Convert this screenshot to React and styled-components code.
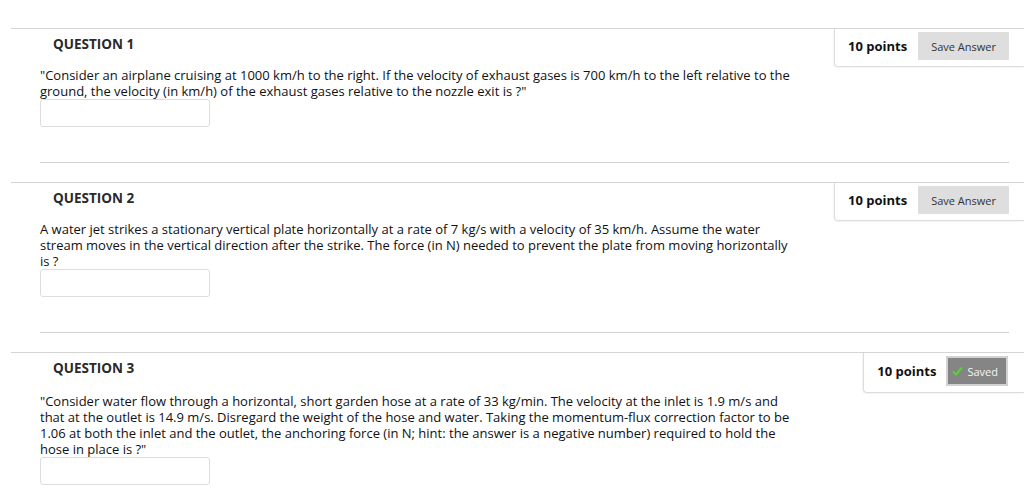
import React from 'react';
import styled, { createGlobalStyle } from 'styled-components';

const GlobalStyle = createGlobalStyle`
    body {
        margin: 0;
        background: #fff;
        font-family: "Open Sans", "Noto Sans", sans-serif;
        color: #222;
    }
`;

const Page = styled.div`
    padding: 28px 0 0 11px;
`;

const Section = styled.div`
    border-top: 1px solid #d4d4d4;
    margin-bottom: 19px;
`;

const Header = styled.div`
    display: flex;
    justify-content: space-between;
    align-items: flex-start;
`;

const Title = styled.h3`
    margin: 0;
    padding: 6px 0 0 42px;
    font-size: 13.5px;
    line-height: 18px;
    font-weight: 700;
    color: #2a2a2a;
`;

const PointsBox = styled.div`
    display: flex;
    align-items: center;
    gap: ${p => (p.saved ? '10px' : '11px')};
    padding: 3px ${p => (p.saved ? '16px' : '15px')} 6px 13px;
    border-left: 1px solid #dcdcdc;
    border-bottom: 1px solid #dcdcdc;
    border-bottom-left-radius: 4px;
    box-shadow: -1px 1px 1px rgba(0, 0, 0, 0.04);
`;

const Points = styled.span`
    font-size: 13px;
    font-weight: 700;
    color: #111;
`;

const SaveButton = styled.button`
    font-family: inherit;
    font-size: 11px;
    height: 28px;
    padding: 0 13px;
    border: none;
    border-radius: 1px;
    background: #dedede;
    color: #333;
    display: flex;
    align-items: center;
`;

const SavedBadge = styled(SaveButton)`
    height: 30px;
    padding: 0 10px 0 6px;
    gap: 4px;
    background: #858585;
    color: #f4f4f4;
    outline: 2px solid #d2d2d2;
    outline-offset: -2px;
`;

const Body = styled.div`
    padding-left: 29px;
`;

const Text = styled.p`
    margin: 0;
    width: 758px;
    font-size: 13px;
    line-height: 16px;
    color: #111;
`;

const Answer = styled.input`
    display: block;
    margin: 0;
    width: 170px;
    height: 28px;
    box-sizing: border-box;
    border: 1px solid #dddddd;
    border-radius: 3px;
    background: #fff;
`;

const Divider = styled.div`
    margin: 35px 15px 0 29px;
    border-top: 1px solid #d0d0d0;
`;

const Check = () => (
    <svg width="11" height="10" viewBox="0 0 11 10">
        <path d="M1 5.5 L4 8.5 L10 1.5" stroke="#5ccf3a" strokeWidth="2" fill="none" />
    </svg>
);

const questions = [
    {
        n: 1,
        text: '"Consider an airplane cruising at 1000 km/h to the right. If the velocity of exhaust gases is 700 km/h to the left relative to the ground, the velocity (in km/h) of the exhaust gases relative to the nozzle exit is ?"',
        saved: false,
    },
    {
        n: 2,
        text: 'A water jet strikes a stationary vertical plate horizontally at a rate of 7 kg/s with a velocity of 35 km/h. Assume the water stream moves in the vertical direction after the strike. The force (in N) needed to prevent the plate from moving horizontally is ?',
        saved: false,
    },
    {
        n: 3,
        text: '"Consider water flow through a horizontal, short garden hose at a rate of 33 kg/min. The velocity at the inlet is 1.9 m/s and that at the outlet is 14.9 m/s. Disregard the weight of the hose and water. Taking the momentum-flux correction factor to be 1.06 at both the inlet and the outlet, the anchoring force (in N; hint: the answer is a negative number) required to hold the hose in place is ?"',
        saved: true,
    },
];

function Question({ n, text, saved }) {
    return (
        <Section>
            <Header>
                <Title>QUESTION {n}</Title>
                <PointsBox saved={saved}>
                    <Points>10 points</Points>
                    {saved
                        ? <SavedBadge><Check />Saved</SavedBadge>
                        : <SaveButton>Save Answer</SaveButton>}
                </PointsBox>
            </Header>
            <Body>
                <Text>{text}</Text>
                <Answer type="text" />
            </Body>
            <Divider />
        </Section>
    );
}

export default function App() {
    return (
        <Page>
            <GlobalStyle />
            {questions.map(q => <Question key={q.n} {...q} />)}
        </Page>
    );
}
